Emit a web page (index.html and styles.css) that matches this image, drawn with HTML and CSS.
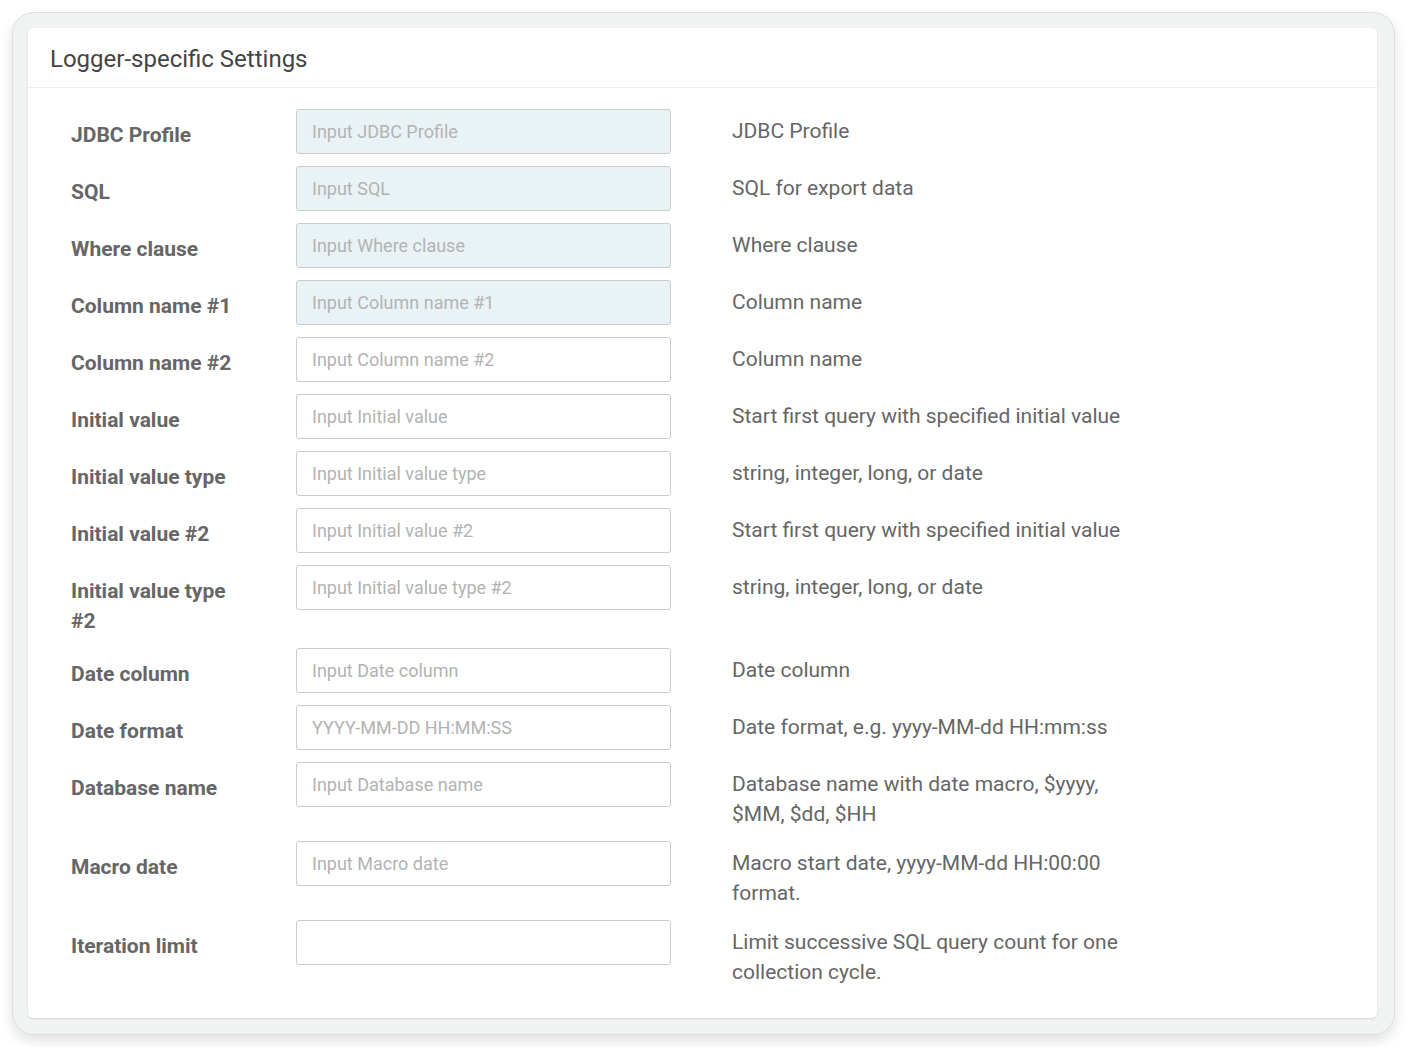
FILE: index.html
```html
<!DOCTYPE html>
<html>
<head>
<meta charset="utf-8">
<link rel="stylesheet" href="styles.css">
</head>
<body>
<div class="frame">
  <div class="card">
    <div class="card-header">Logger-specific Settings</div>
    <div class="card-body">
      <div class="row"><div class="label">JDBC Profile</div><div class="field"><input class="input disabled" placeholder="Input JDBC Profile" disabled></div><div class="desc">JDBC Profile</div></div>
      <div class="row"><div class="label">SQL</div><div class="field"><input class="input disabled" placeholder="Input SQL" disabled></div><div class="desc">SQL for export data</div></div>
      <div class="row"><div class="label">Where clause</div><div class="field"><input class="input disabled" placeholder="Input Where clause" disabled></div><div class="desc">Where clause</div></div>
      <div class="row"><div class="label">Column name #1</div><div class="field"><input class="input disabled" placeholder="Input Column name #1" disabled></div><div class="desc">Column name</div></div>
      <div class="row"><div class="label">Column name #2</div><div class="field"><input class="input" placeholder="Input Column name #2"></div><div class="desc">Column name</div></div>
      <div class="row"><div class="label">Initial value</div><div class="field"><input class="input" placeholder="Input Initial value"></div><div class="desc">Start first query with specified initial value</div></div>
      <div class="row"><div class="label">Initial value type</div><div class="field"><input class="input" placeholder="Input Initial value type"></div><div class="desc">string, integer, long, or date</div></div>
      <div class="row"><div class="label">Initial value #2</div><div class="field"><input class="input" placeholder="Input Initial value #2"></div><div class="desc">Start first query with specified initial value</div></div>
      <div class="row"><div class="label">Initial value type #2</div><div class="field"><input class="input" placeholder="Input Initial value type #2"></div><div class="desc">string, integer, long, or date</div></div>
      <div class="row"><div class="label">Date column</div><div class="field"><input class="input" placeholder="Input Date column"></div><div class="desc">Date column</div></div>
      <div class="row"><div class="label">Date format</div><div class="field"><input class="input" placeholder="YYYY-MM-DD HH:MM:SS"></div><div class="desc">Date format, e.g. yyyy-MM-dd HH:mm:ss</div></div>
      <div class="row"><div class="label">Database name</div><div class="field"><input class="input" placeholder="Input Database name"></div><div class="desc">Database name with date macro, $yyyy, $MM, $dd, $HH</div></div>
      <div class="row"><div class="label">Macro date</div><div class="field"><input class="input" placeholder="Input Macro date"></div><div class="desc">Macro start date, yyyy-MM-dd HH:00:00 format.</div></div>
      <div class="row"><div class="label">Iteration limit</div><div class="field"><input class="input"></div><div class="desc">Limit successive SQL query count for one collection cycle.</div></div>
    </div>
  </div>
</div>
</body>
</html>
```
FILE: styles.css
```css
html, body {
  margin: 0;
  padding: 0;
  background: #ffffff;
}
body {
  padding: 12px;
  font-family: Roboto, "Liberation Sans", sans-serif;
}
.frame {
  width: 1383px;
  box-sizing: border-box;
  padding: 15px 17px 16px 15px;
  background: #f1f3f3;
  border: 1px solid #dcdfdf;
  border-radius: 22px;
  box-shadow: 0 6px 14px rgba(0, 0, 0, 0.12);
}
.card {
  background: #ffffff;
  border-radius: 5px;
  box-shadow: 0 1px 2px rgba(0, 0, 0, 0.12);
}
.card-header {
  height: 60px;
  box-sizing: border-box;
  padding: 17px 22px 0;
  font-size: 24px;
  line-height: 28px;
  color: #444;
  border-bottom: 1px solid #ebeded;
}
.card-body {
  padding: 21px 0 19px 43px;
}
.row {
  display: grid;
  grid-template-columns: 225px 375px 461px;
  margin-bottom: 12px;
}
.label {
  padding: 11px 45px 0 0;
  font-size: 21px;
  line-height: 30px;
  font-weight: 700;
  color: #666;
}
.input {
  display: block;
  width: 375px;
  height: 45px;
  box-sizing: border-box;
  border: 1px solid #cccccc;
  border-radius: 3px;
  background: #ffffff;
  padding: 0 15px;
  font-family: Roboto, "Liberation Sans", sans-serif;
  font-size: 18px;
  color: #555;
  margin: 0;
}
.input::placeholder {
  color: #b3b3b3;
  opacity: 1;
}
.input.disabled {
  background: #e9f3f5;
}
.desc {
  padding: 7px 0 0 61px;
  font-size: 21px;
  line-height: 30px;
  color: #666;
}
```
